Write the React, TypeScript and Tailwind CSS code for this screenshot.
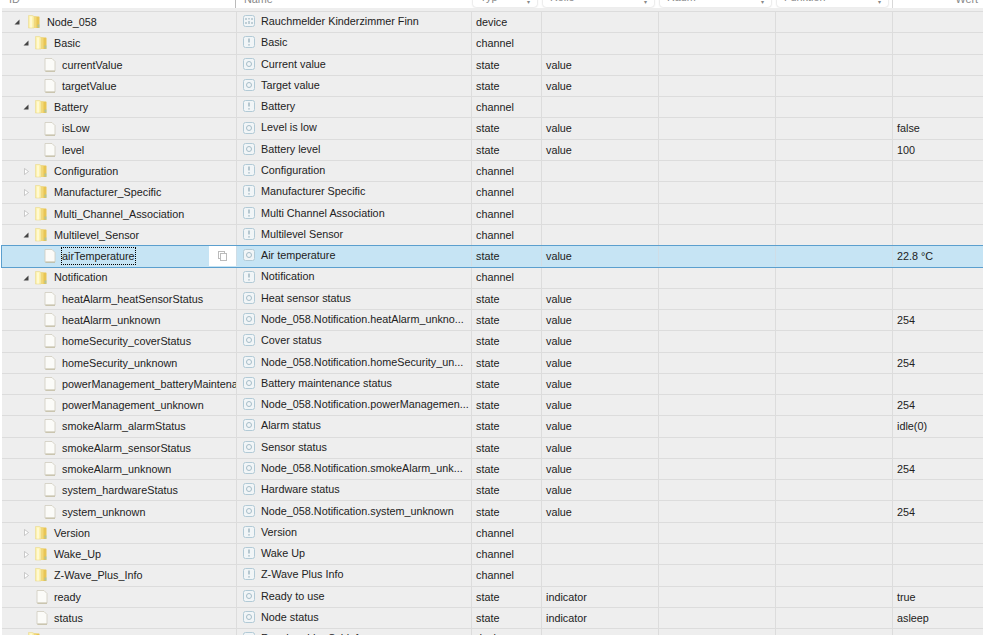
type Row = {
  id: string;
  depth: number;
  kind: 'open' | 'closed' | 'file';
  name: string;
  type: string;
  role?: string;
  value?: string;
  selected?: boolean;
};

const rows: Row[] = [
  { id: 'Node_058', depth: 0, kind: 'open', name: 'Rauchmelder Kinderzimmer Finn', type: 'device' },
  { id: 'Basic', depth: 1, kind: 'open', name: 'Basic', type: 'channel' },
  { id: 'currentValue', depth: 2, kind: 'file', name: 'Current value', type: 'state', role: 'value' },
  { id: 'targetValue', depth: 2, kind: 'file', name: 'Target value', type: 'state', role: 'value' },
  { id: 'Battery', depth: 1, kind: 'open', name: 'Battery', type: 'channel' },
  { id: 'isLow', depth: 2, kind: 'file', name: 'Level is low', type: 'state', role: 'value', value: 'false' },
  { id: 'level', depth: 2, kind: 'file', name: 'Battery level', type: 'state', role: 'value', value: '100' },
  { id: 'Configuration', depth: 1, kind: 'closed', name: 'Configuration', type: 'channel' },
  { id: 'Manufacturer_Specific', depth: 1, kind: 'closed', name: 'Manufacturer Specific', type: 'channel' },
  { id: 'Multi_Channel_Association', depth: 1, kind: 'closed', name: 'Multi Channel Association', type: 'channel' },
  { id: 'Multilevel_Sensor', depth: 1, kind: 'open', name: 'Multilevel Sensor', type: 'channel' },
  { id: 'airTemperature', depth: 2, kind: 'file', name: 'Air temperature', type: 'state', role: 'value', value: '22.8 °C', selected: true },
  { id: 'Notification', depth: 1, kind: 'open', name: 'Notification', type: 'channel' },
  { id: 'heatAlarm_heatSensorStatus', depth: 2, kind: 'file', name: 'Heat sensor status', type: 'state', role: 'value' },
  { id: 'heatAlarm_unknown', depth: 2, kind: 'file', name: 'Node_058.Notification.heatAlarm_unkno...', type: 'state', role: 'value', value: '254' },
  { id: 'homeSecurity_coverStatus', depth: 2, kind: 'file', name: 'Cover status', type: 'state', role: 'value' },
  { id: 'homeSecurity_unknown', depth: 2, kind: 'file', name: 'Node_058.Notification.homeSecurity_un...', type: 'state', role: 'value', value: '254' },
  { id: 'powerManagement_batteryMaintenanceStatus', depth: 2, kind: 'file', name: 'Battery maintenance status', type: 'state', role: 'value' },
  { id: 'powerManagement_unknown', depth: 2, kind: 'file', name: 'Node_058.Notification.powerManagemen...', type: 'state', role: 'value', value: '254' },
  { id: 'smokeAlarm_alarmStatus', depth: 2, kind: 'file', name: 'Alarm status', type: 'state', role: 'value', value: 'idle(0)' },
  { id: 'smokeAlarm_sensorStatus', depth: 2, kind: 'file', name: 'Sensor status', type: 'state', role: 'value' },
  { id: 'smokeAlarm_unknown', depth: 2, kind: 'file', name: 'Node_058.Notification.smokeAlarm_unk...', type: 'state', role: 'value', value: '254' },
  { id: 'system_hardwareStatus', depth: 2, kind: 'file', name: 'Hardware status', type: 'state', role: 'value' },
  { id: 'system_unknown', depth: 2, kind: 'file', name: 'Node_058.Notification.system_unknown', type: 'state', role: 'value', value: '254' },
  { id: 'Version', depth: 1, kind: 'closed', name: 'Version', type: 'channel' },
  { id: 'Wake_Up', depth: 1, kind: 'closed', name: 'Wake Up', type: 'channel' },
  { id: 'Z-Wave_Plus_Info', depth: 1, kind: 'closed', name: 'Z-Wave Plus Info', type: 'channel' },
  { id: 'ready', depth: 1, kind: 'file', name: 'Ready to use', type: 'state', role: 'indicator', value: 'true' },
  { id: 'status', depth: 1, kind: 'file', name: 'Node status', type: 'state', role: 'indicator', value: 'asleep' },
];

function Folder() {
  return (
    <svg width="12" height="14" viewBox="0 0 12 14" className="shrink-0 block">
      <path d="M5 1.500h6l.5.5v11h-6.500z" fill="#e8c555" />
      <path d="M6 1.500h2.500v11.500h-2.500z" fill="#f3d877" />
      <path d="M.5.500h4l1.500 1v11.500h-5.500z" fill="#fdf2ae" stroke="#ead98f" strokeWidth="0.600" />
      <path d="M2 1.500h2v11h-2z" fill="#fff9d2" />
      <path d="M9.500 9.500h2v3h-2z" fill="#8fc4c4" opacity="0.600" />
    </svg>
  );
}

function FileIcon() {
  return (
    <svg width="12" height="14" viewBox="0 0 12 14" className="shrink-0 block">
      <path d="M1 .5h7l3 3v9.500h-10z" fill="#fbfbf8" stroke="#cfccbe" strokeWidth="0.800" />
      <path d="M1.500 13.200h9.500" stroke="#b8ae8c" strokeWidth="0.800" />
    </svg>
  );
}

function TypeIcon({ type }: { type: string }) {
  return (
    <svg width="12" height="12" viewBox="0 0 12 12" className="shrink-0 block">
      <rect x="0.500" y="0.500" width="11" height="11" rx="2" fill="#f1f5f7" stroke="#b2cad6" />
      {type === 'state' && <circle cx="6" cy="6" r="2.500" fill="none" stroke="#a5bcc8" />}
      {type === 'channel' && <path d="M6 2.500v4M6 8.200v1.300" stroke="#8ea8b5" strokeWidth="1.200" />}
      {type === 'device' && <path d="M3 3v2M3 7v2M6 3v1.500M6 6v3M9 3v2M9 7v2" stroke="#8ea8b5" strokeWidth="1" />}
    </svg>
  );
}

function Toggle({ kind }: { kind: Row['kind'] }) {
  return (
    <span className="w-[6px] shrink-0 flex justify-center">
      {kind === 'open' && (
        <svg width="6" height="6" viewBox="0 0 6 6" className="block">
          <path d="M5.500 0.500v5h-5z" fill="#444" />
        </svg>
      )}
      {kind === 'closed' && (
        <svg width="5" height="7" viewBox="0 0 5 7" className="block">
          <path d="M.5.500l4 3-4 3z" fill="#fff" stroke="#b5b5b5" strokeWidth="0.700" />
        </svg>
      )}
    </span>
  );
}

function Filter({ label, width }: { label: string; width: string }) {
  return (
    <div className={`${width} shrink-0 flex pl-[2px] pr-[4px]`}>
      <div className="flex-1 h-[8px] rounded-b-[3px] shadow-[0_0_2px_#bbb] flex justify-between px-[7px] -mt-[1px] text-[10.800px] leading-[5px] text-[#888] overflow-hidden">
        <span className="-mt-[4px]">{label}</span>
        <span className="text-[6px] leading-[6px]">▾</span>
      </div>
    </div>
  );
}

function TreeRow({ row }: { row: Row }) {
  const bg = row.selected ? 'bg-[#c6e4f4] relative z-10 outline-1 outline-[#5b9fce] border-[#c6e4f4]' : 'bg-[#eeeeee] border-[#dcdcdc]';
  const cell = `h-full flex items-center shrink-0 overflow-hidden whitespace-nowrap pl-[4px] border-l ${row.selected ? 'border-[#cfdde6]' : 'border-[#dcdcdc]'}`;
  let left = 'pl-[21px]';
  if (row.kind === 'file') left = row.depth === 2 ? 'pl-[42px]' : 'pl-[34px]';
  else if (row.depth === 0) left = 'pl-[12px]';
  return (
    <div className={`h-[21.290px] shrink-0 flex text-[10.800px] text-[#222] border-b ${bg}`}>
      <div className={`w-[234px] h-full shrink-0 flex items-center relative overflow-hidden whitespace-nowrap ${left}`}>
        {row.kind !== 'file' && <Toggle kind={row.kind} />}
        {row.kind !== 'file' && <span className={row.depth === 0 ? 'ml-[8px]' : 'ml-[6px]'}><Folder /></span>}
        {row.kind === 'file' && <FileIcon />}
        <span className={row.kind === 'file' ? `ml-[6px] ${row.selected ? 'outline-1 outline-dotted outline-black' : ''}` : 'ml-[7px]'}>{row.id}</span>
        {row.selected && (
          <span className="absolute right-0 top-0 h-full w-[27px] bg-white flex items-center justify-center">
            <svg width="9" height="10" viewBox="0 0 9 10" className="block">
              <rect x="0.500" y="0.500" width="6" height="7" fill="none" stroke="#bbb" />
              <rect x="2.500" y="2.500" width="6" height="7" fill="#fff" stroke="#bbb" />
            </svg>
          </span>
        )}
      </div>
      <div className={`${cell} w-[235px] gap-[6px] pl-[6px] pb-[2px]`}>
        <TypeIcon type={row.type} />
        <span>{row.name}</span>
      </div>
      <div className={`${cell} w-[70px]`}>{row.type}</div>
      <div className={`${cell} w-[117px]`}>{row.role}</div>
      <div className={`${cell} w-[117px]`} />
      <div className={`${cell} w-[117px]`} />
      <div className={`${cell} flex-1`}>{row.value}</div>
    </div>
  );
}

export default function App() {
  return (
    <div className="h-[635px] w-[983px] overflow-hidden bg-white flex flex-col pl-[2px]" style={{ fontFamily: '"Liberation Sans", Arial, sans-serif' }}>
      <div className="h-[8px] shrink-0 flex overflow-hidden bg-white text-[10.800px] text-[#888]">
        <div className="w-[234px] shrink-0 pl-[7px] leading-[5px] border-r border-[#bbb]"><div className="-mt-[3px]">ID</div></div>
        <div className="w-[235px] shrink-0 pl-[8px] leading-[5px]"><div className="-mt-[3px]">Name</div></div>
        <Filter label="Typ" width="w-[70px]" />
        <Filter label="Rolle" width="w-[117px]" />
        <Filter label="Raum" width="w-[117px]" />
        <Filter label="Funktion" width="w-[117px]" />
        <div className="flex-1 text-right pr-[5px] leading-[5px] border-l border-[#d8d8d8]"><div className="-mt-[3px]">Wert</div></div>
      </div>
      <div className="h-[4px] shrink-0 bg-[#eeeeee] border-b border-[#dcdcdc]" />
      {rows.map((row) => <TreeRow key={row.id} row={row} />)}
      <div className="flex-1 flex bg-[#eeeeee] text-[10.800px] leading-[12px] text-[#222]">
        <div className="w-[234px] shrink-0 pl-[26px] pt-[3px]"><Folder /></div>
        <div className="w-[235px] shrink-0 border-l border-[#dcdcdc] flex items-start gap-[6px] pl-[6px] pt-[3px] whitespace-nowrap"><TypeIcon type="device" /><span>Rauchmelder Schlafz</span></div>
        <div className="w-[70px] shrink-0 border-l border-[#dcdcdc] pl-[4px] pt-[3px]">device</div>
        <div className="w-[117px] shrink-0 border-l border-[#dcdcdc]" />
        <div className="w-[117px] shrink-0 border-l border-[#dcdcdc]" />
        <div className="w-[117px] shrink-0 border-l border-[#dcdcdc]" />
        <div className="flex-1 border-l border-[#dcdcdc]" />
      </div>
    </div>
  );
}
